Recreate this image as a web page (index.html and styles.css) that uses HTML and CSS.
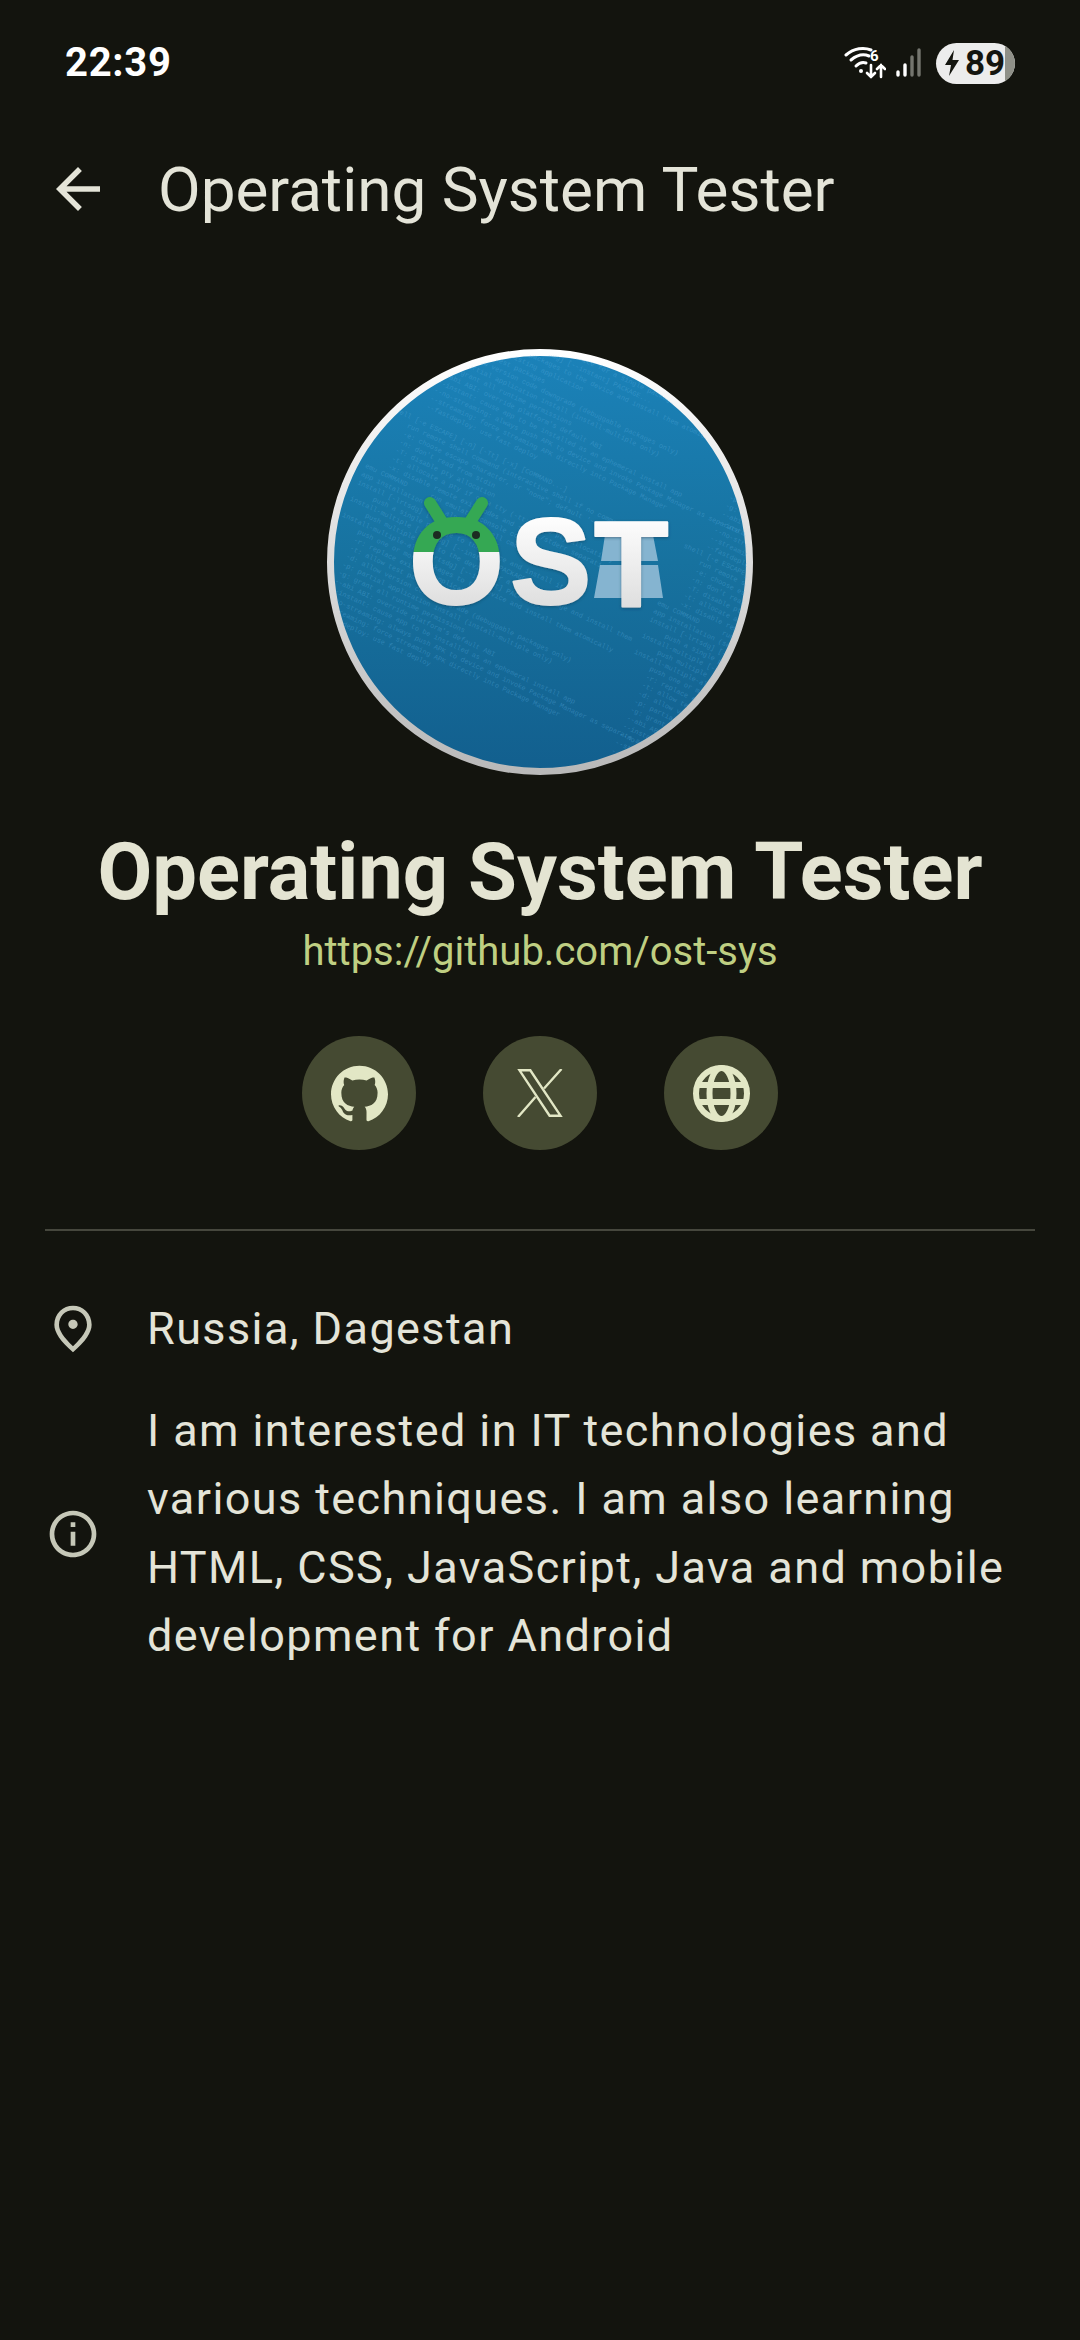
FILE: index.html
```html
<!DOCTYPE html>
<html lang="en">
<head>
    <meta charset="UTF-8">
    <meta name="viewport" content="width=device-width, initial-scale=1.0">
    <title>Operating System Tester</title>
    <link rel="stylesheet" href="styles.css">
</head>
<body>
    <div class="status-bar">
        <span class="clock">22:39</span>
        <div class="status-icons">
            <svg class="wifi" viewBox="0 0 42 34" fill="none" stroke="#fff" stroke-linecap="round">
                <path d="M2 9C10 2 20 1 27 4" stroke-width="3"/>
                <path d="M7 14C13 9 20 8 25 10" stroke-width="3"/>
                <path d="M12 20C15 17 19 16 22 17" stroke-width="3"/>
                <circle cx="17" cy="25" r="2" fill="#fff" stroke="none"/>
                <text class="wifi-six" x="26" y="15">6</text>
                <path d="M27 19V31M23 27l4 4 4-4" stroke-width="2.6"/>
                <path d="M37 31V19M33 23l4-4 4 4" stroke-width="2.6"/>
            </svg>
            <svg class="signal" viewBox="0 0 26 30" stroke-linecap="round" stroke-width="3.4">
                <path d="M2 27V24" stroke="#fff"/>
                <path d="M9 27V17" stroke="#fff"/>
                <path d="M16 27V9" stroke="#74756e"/>
                <path d="M23 27V2" stroke="#74756e"/>
            </svg>
            <div class="battery">
                <svg class="bolt" viewBox="0 0 16 26"><path d="M10 0 1 15h6l-2 11 10-16H8.500z" fill="#14150f"/></svg>
                <span class="battery-level">89</span>
            </div>
        </div>
    </div>

    <div class="top-bar">
        <svg class="back-icon" viewBox="0 0 24 24"><path d="M20 11H7.830l5.590-5.590L12 4l-8 8 8 8 1.410-1.410L7.830 13H20v-2z"/></svg>
        <h1 class="top-title">Operating System Tester</h1>
    </div>

    <div class="profile">
        <svg class="avatar" viewBox="0 0 426 426">
            <defs>
                <linearGradient id="blueBg" x1="0" y1="0" x2="0" y2="1">
                    <stop offset="0" stop-color="#1b82b9"/>
                    <stop offset="0.5" stop-color="#17729f"/>
                    <stop offset="1" stop-color="#125f8e"/>
                </linearGradient>
                <linearGradient id="ring" x1="0" y1="0" x2="0" y2="1">
                    <stop offset="0" stop-color="#ffffff"/>
                    <stop offset="1" stop-color="#b9b9b9"/>
                </linearGradient>
                <linearGradient id="letterO" gradientUnits="userSpaceOnUse" x1="0" y1="160" x2="0" y2="262">
                    <stop offset="0.42" stop-color="#34a853"/>
                    <stop offset="0.42" stop-color="#f4f4f4"/>
                    <stop offset="1" stop-color="#dcdcdc"/>
                </linearGradient>
                <linearGradient id="letters" gradientUnits="userSpaceOnUse" x1="0" y1="165" x2="0" y2="262">
                    <stop offset="0" stop-color="#ffffff"/>
                    <stop offset="1" stop-color="#dddddd"/>
                </linearGradient>
                <filter id="logoShadow" x="-10%" y="-10%" width="120%" height="120%">
                    <feDropShadow dx="0" dy="1" stdDeviation="1.500" flood-color="#0a3550" flood-opacity="0.5"/>
                </filter>
                <clipPath id="disc"><circle cx="213" cy="213" r="207"/></clipPath>
                <g id="helpText">
                    <text class="help-text">
                        <tspan x="0" dy="0">shell [-e ESCAPE] [-n] [-Tt] [-x] [COMMAND...]</tspan>
                        <tspan x="0" dy="9">     run remote shell command (interactive shell if no command given)</tspan>
                        <tspan x="0" dy="9">     -e: choose escape character, or "none"; default '~'</tspan>
                        <tspan x="0" dy="9">     -n: don't read from stdin</tspan>
                        <tspan x="0" dy="9">     -T: disable pty allocation</tspan>
                        <tspan x="0" dy="9">     -t: allocate a pty if on a tty (-tt: force pty allocation)</tspan>
                        <tspan x="0" dy="9">     -x: disable remote exit codes and stdout/stderr separation</tspan>
                        <tspan x="0" dy="9">emu COMMAND      run emulator console command</tspan>
                        <tspan x="0" dy="9">app installation (see also `adb shell cmd package help`):</tspan>
                        <tspan x="0" dy="9">install [-lrtsdg] [--instant] PACKAGE</tspan>
                        <tspan x="0" dy="9">     push a single package to the device and install it</tspan>
                        <tspan x="0" dy="9">install-multiple [-lrtsdg] [--instant] PACKAGE...</tspan>
                        <tspan x="0" dy="9">     push multiple APKs to the device for a single package and install them</tspan>
                        <tspan x="0" dy="9">install-multiple-all [-lrtsdg] [--instant] PACKAGE...</tspan>
                        <tspan x="0" dy="9">     push one or more packages to the device and install them atomically</tspan>
                        <tspan x="0" dy="9">     -r: replace existing application</tspan>
                        <tspan x="0" dy="9">     -t: allow test packages</tspan>
                        <tspan x="0" dy="9">     -d: allow version code downgrade (debuggable packages only)</tspan>
                        <tspan x="0" dy="9">     -p: partial application install (install-multiple only)</tspan>
                        <tspan x="0" dy="9">     -g: grant all runtime permissions</tspan>
                        <tspan x="0" dy="9">     --abi ABI: override platform's default ABI</tspan>
                        <tspan x="0" dy="9">     --instant: cause app to be installed as an ephemeral install app</tspan>
                        <tspan x="0" dy="9">     --no-streaming: always push APK to device and invoke Package Manager as separate steps</tspan>
                        <tspan x="0" dy="9">     --streaming: force streaming APK directly into Package Manager</tspan>
                        <tspan x="0" dy="9">     --fastdeploy: use fast deploy</tspan>
                    </text>
                </g>
            </defs>
            <circle cx="213" cy="213" r="209.500" fill="url(#blueBg)" stroke="url(#ring)" stroke-width="7"/>
            <g clip-path="url(#disc)">
                <use href="#helpText" transform="translate(80 50) rotate(25) translate(0 -216)"/>
                <use href="#helpText" transform="translate(-27 257) rotate(25) translate(0 -216)"/>
                <use href="#helpText" transform="translate(265 394) rotate(25) translate(0 -216)"/>
                <use href="#helpText" transform="translate(360 190) rotate(25) translate(0 -216)"/>
            </g>
            <!-- road behind the T -->
            <path d="M278 186H295V212H274zM311 186H326L331 212H311zM273 216H295V249H267zM311 216H331L336 249H311z" fill="#85b4d0"/>
            <g filter="url(#logoShadow)">
                <path d="M103 154 115 173M155 154 143 173" stroke="#34a853" stroke-width="12" stroke-linecap="round"/>
                <g class="logo-letters">
                    <text x="82" y="255" fill="url(#letterO)" stroke="url(#letterO)">O</text>
                    <text x="183" y="255" fill="url(#letters)" stroke="url(#letters)">S</text>
                    <text x="267" y="258" fill="url(#letters)" stroke="url(#letters)">T</text>
                </g>
            </g>
            <circle cx="110" cy="186" r="4" fill="#1c2b22"/>
            <circle cx="149" cy="186" r="4" fill="#1c2b22"/>
        </svg>

        <h2 class="name">Operating System Tester</h2>
        <div class="url">https://github.com/ost-sys</div>

        <div class="links">
            <div class="link-btn">
                <svg class="link-github" viewBox="0 0 24 24"><path d="M12 .297c-6.630 0-12 5.373-12 12 0 5.303 3.438 9.800 8.205 11.385.600.113.820-.258.820-.577 0-.285-.010-1.040-.015-2.040-3.338.724-4.042-1.610-4.042-1.610C4.422 18.070 3.633 17.700 3.633 17.700c-1.087-.744.084-.729.084-.729 1.205.084 1.838 1.236 1.838 1.236 1.070 1.835 2.809 1.305 3.495.998.108-.776.417-1.305.760-1.605-2.665-.300-5.466-1.332-5.466-5.930 0-1.310.465-2.380 1.235-3.220-.135-.303-.540-1.523.105-3.176 0 0 1.005-.322 3.300 1.230.960-.267 1.980-.399 3-.405 1.020.006 2.040.138 3 .405 2.280-1.552 3.285-1.230 3.285-1.230.645 1.653.240 2.873.120 3.176.765.840 1.230 1.910 1.230 3.220 0 4.610-2.805 5.625-5.475 5.920.420.360.810 1.096.810 2.220 0 1.606-.015 2.896-.015 3.286 0 .315.210.690.825.570C20.565 22.092 24 17.592 24 12.297c0-6.627-5.373-12-12-12"/></svg>
            </div>
            <div class="link-btn">
                <svg class="link-x" viewBox="0 0 46 48" fill="none" stroke="#e2e7c5" stroke-width="2.400">
                    <path d="M2.500 1.300H13.300L43.500 46.700H32.600z"/>
                    <path d="M44.500 0 27 19.500M18.500 28 1 48"/>
                </svg>
            </div>
            <div class="link-btn">
                <svg class="link-globe" viewBox="0 0 57 57" fill="none" stroke="#e2e7c5" stroke-width="6">
                    <circle cx="28.500" cy="28.500" r="25.500"/>
                    <ellipse cx="28.500" cy="28.500" rx="12" ry="25.500"/>
                    <path d="M3 20H54M3 37H54"/>
                </svg>
            </div>
        </div>
    </div>

    <div class="divider"></div>

    <div class="details">
        <div class="detail-row">
            <svg class="detail-icon" viewBox="0 0 24 24"><path d="M12 12c-1.100 0-2-.900-2-2s.900-2 2-2 2 .900 2 2-.900 2-2 2zm6-1.800C18 6.570 15.350 4 12 4s-6 2.570-6 6.200c0 2.340 1.950 5.440 6 9.140 4.050-3.700 6-6.800 6-9.140zM12 2c4.200 0 8 3.220 8 8.200 0 3.320-2.670 7.250-8 11.800-5.330-4.550-8-8.480-8-11.800C4 5.220 7.800 2 12 2z"/></svg>
            <p class="detail-text">Russia, Dagestan</p>
        </div>
        <div class="detail-row">
            <svg class="detail-icon" viewBox="0 0 24 24"><path d="M11 7h2v2h-2zm0 4h2v6h-2zm1-9C6.480 2 2 6.480 2 12s4.480 10 10 10 10-4.480 10-10S17.520 2 12 2zm0 18c-4.410 0-8-3.590-8-8s3.590-8 8-8 8 3.590 8 8-3.590 8-8 8z"/></svg>
            <p class="detail-text">I am interested in IT technologies and various techniques. I am also learning HTML, CSS, JavaScript, Java and mobile development for Android</p>
        </div>
    </div>
</body>
</html>
```

FILE: styles.css
```css
body {
    font-family: Roboto, "Liberation Sans", sans-serif;
    background-color: #13140e;
    color: #e4e4d8;
    width: 1080px;
    height: 2340px;
    margin: 0;
    overflow: hidden;
}

.status-bar {
    height: 124px;
    display: flex;
    align-items: center;
    justify-content: space-between;
    padding: 0 65px;
}

.clock {
    font-size: 40px;
    font-weight: 700;
    letter-spacing: 0.700px;
    color: #ffffff;
}

.status-icons {
    display: flex;
    align-items: center;
    margin-top: 2px;
}

.wifi {
    width: 42px;
    height: 34px;
}

.wifi-six {
    font-family: Roboto, sans-serif;
    font-size: 15px;
    font-weight: 700;
    fill: #ffffff;
    stroke: none;
}

.signal {
    width: 26px;
    height: 30px;
    margin-left: 10px;
}

.battery {
    position: relative;
    width: 79px;
    height: 41px;
    margin-left: 14px;
    border-radius: 21px;
    background-color: #ececec;
    overflow: hidden;
    display: flex;
    align-items: center;
    padding-left: 8px;
    box-sizing: border-box;
}

.battery::after {
    content: "";
    position: absolute;
    top: 0;
    right: 0;
    bottom: 0;
    width: 10px;
    background-color: #8f9088;
}

.bolt {
    width: 16px;
    height: 26px;
}

.battery-level {
    font-size: 35px;
    font-weight: 700;
    color: #14150f;
    margin-left: 5px;
    position: relative;
    z-index: 1;
}

.top-bar {
    height: 130px;
    display: flex;
    align-items: center;
    padding-left: 45px;
}

.back-icon {
    width: 66px;
    height: 66px;
    fill: #e4e4d8;
}

.top-title {
    margin: 0 0 0 47px;
    font-size: 62px;
    font-weight: 400;
}

.profile {
    display: flex;
    flex-direction: column;
    align-items: center;
    padding-top: 95px;
}

.avatar {
    width: 426px;
    height: 426px;
}

.help-text {
    font-family: "Liberation Mono", monospace;
    font-size: 7px;
    fill: #5fb2e4;
    fill-opacity: 0.36;
    white-space: pre;
}

.logo-letters {
    font-family: "Liberation Sans", sans-serif;
    font-size: 122px;
    font-weight: 700;
    stroke-width: 2;
    stroke-linejoin: round;
}

.name {
    margin: 49px 0 0;
    font-size: 79.500px;
    line-height: 96px;
    font-weight: 700;
    color: #e4e4d2;
}

.url {
    font-size: 40px;
    line-height: 63px;
    color: #bfcf82;
}

.links {
    display: flex;
    gap: 67px;
    margin-top: 53px;
}

.link-btn {
    width: 114px;
    height: 114px;
    border-radius: 50%;
    background-color: #454a32;
    display: flex;
    align-items: center;
    justify-content: center;
}

.link-btn svg {
    fill: #e2e7c5;
}

.link-btn .link-globe,
.link-btn .link-x {
    fill: none;
}

.link-globe {
    width: 57px;
    height: 57px;
}

.link-github {
    width: 57px;
    height: 57px;
}

.link-x {
    width: 46px;
    height: 48px;
}

.divider {
    height: 2px;
    margin: 79px 45px 0;
    background-color: #46473d;
}

.details {
    display: flex;
    flex-direction: column;
    gap: 33px;
    margin-top: 64px;
    padding: 0 45px;
}

.detail-row {
    display: flex;
    align-items: center;
    gap: 46px;
}

.detail-icon {
    width: 56px;
    height: 56px;
    flex-shrink: 0;
    fill: #c6c8b8;
}

.detail-text {
    margin: 0;
    font-size: 45px;
    line-height: 68.600px;
    letter-spacing: 1.400px;
    color: #e4e4d8;
}
```
